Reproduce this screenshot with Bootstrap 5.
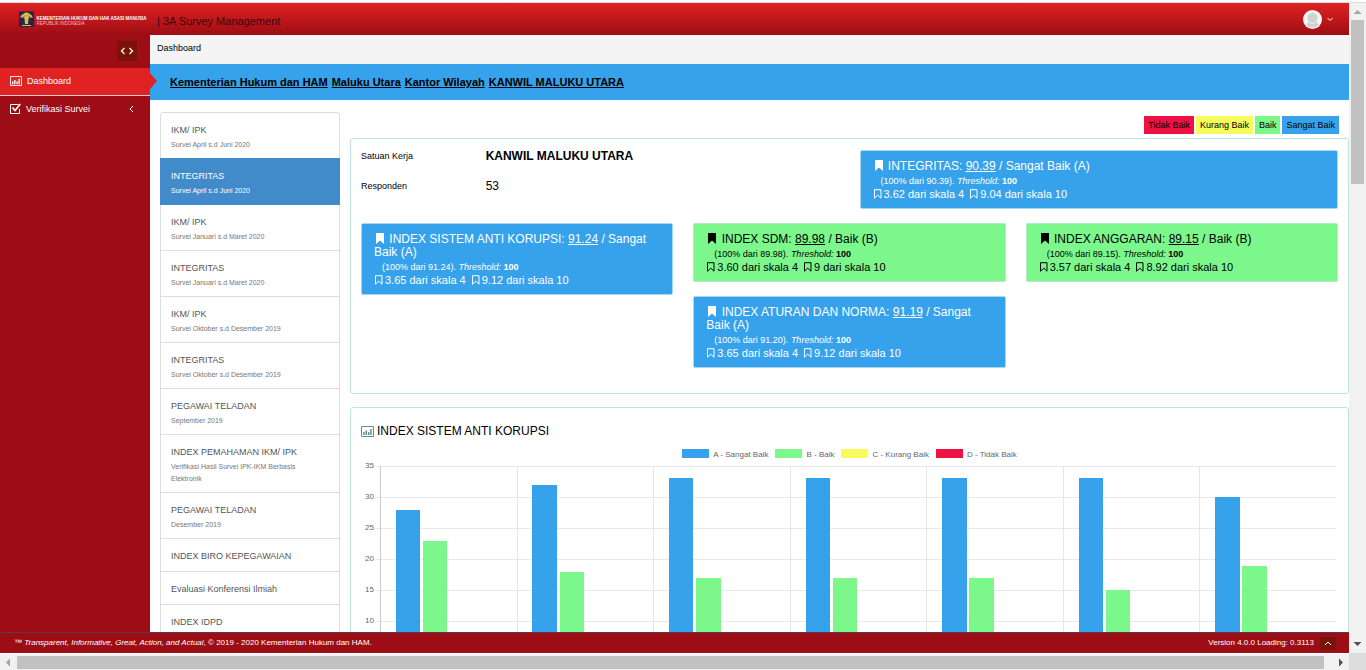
<!DOCTYPE html>
<html lang="id">
<head>
<meta charset="utf-8">
<meta name="viewport" content="width=device-width, initial-scale=1">
<title>3A Survey Management</title>
<link href="https://cdn.jsdelivr.net/npm/bootstrap@5.3.0/dist/css/bootstrap.min.css" rel="stylesheet">
<style>
:root{--red:#e02222;--dark:#9d0d15;--blue:#36a2eb;--green:#7bf78c;--yellow:#f7fb5c;--crimson:#ee1144}
body{font-family:"Liberation Sans",Arial,sans-serif;font-size:9px;line-height:12px;color:#000;background:#fff}
a{color:inherit}
.shell{height:100vh;display:grid;grid-template-columns:minmax(0,1fr) 17px;grid-template-rows:3px minmax(0,1fr) 17px;overflow:hidden}
.edge{grid-column:1/3;background:#fff;border-bottom:1px solid #dcdcdc}
.topbar{height:32px;background:linear-gradient(#e02222,#9d0d15);padding:0 16px 0 19px}
.app-name{font-size:11px;line-height:16px;color:#3a0508}
.user-btn{color:#fff;line-height:1;gap:5px}
.side{width:150px;background:var(--dark);color:#fff;position:relative;z-index:2}
.side-toggle{width:20px;height:20px;background:#7b1408;color:#fff;margin:6px 13px 7px auto}
.side-link{color:#fff;text-decoration:none;height:27px;padding:0 16px 2px 10px;gap:5px}
.side-link.current{background:var(--red);position:relative}
.side-link.current::after{content:"";position:absolute;left:100%;top:5px;border:8px solid transparent;border-left:7px solid var(--red);border-right:0}
.side-item{border-bottom:1px solid #f4c9cb}
.side-item:last-child{border:0}
.crumb{height:29px;background:#f4f4f4;padding:7px 7px 0}
.unitbar{background:var(--blue);height:36px;padding:0 20px;font-size:11px;font-weight:700;gap:4px}
.work{gap:10px;padding:12px 0 0 10px}
.survey-col{width:180px;flex:none}
.survey{--bs-list-group-border-color:#ddd;--bs-list-group-active-bg:#428bca;--bs-list-group-active-border-color:#428bca;--bs-list-group-border-radius:3px}
.survey .list-group-item{padding:10px 10px 7px;min-height:33px;color:#555}
.survey .list-group-item.active{color:#fff}
.survey strong{display:block;font-weight:400;line-height:14px}
.survey span{display:block;font-size:7px;margin-top:2px;color:#777;max-width:140px}
.survey .active span{color:#fff}
.keys{gap:2px;padding:4px 10px 4px 0}
.key{line-height:18px;padding:0 4px}
.k-a{background:var(--blue)}.k-b{background:var(--green)}.k-c{background:var(--yellow)}.k-d{background:var(--crimson)}
.panel{border:1px solid #bce3e6;border-radius:3px;padding:11px 10px;margin-bottom:13px}
.panel .row{--bs-gutter-x:20px}
.unit-facts dd{font-size:12px;margin-bottom:18px}
.unit-facts dd:last-child{margin-bottom:0}
.score{border:1px solid #a9d7f0;border-radius:2px;padding:9px 12px 7px;margin-bottom:14px;background:var(--blue);color:#fff}
.score.good{background:var(--green);border-color:#b4e9c4;color:#000}
.score h2{font-size:12px;line-height:13px;font-weight:400;margin:0 0 2px}
.score p{margin:0;padding-left:8px}
.score div{font-size:11px;line-height:14px}
.score h2 svg{margin:0 2px 2px;vertical-align:bottom}
.score div svg{margin-right:2px;vertical-align:-1px}
.score div span{margin-right:5px}
.chart-title{font-size:12px;line-height:24px;font-weight:400;margin:0;gap:3px}
.legend-row{font-size:8px;color:#666;gap:7px;margin-top:6px}
.legend-row i{width:27px;height:9px;display:inline-block;margin-right:4px;vertical-align:-1px}
.yaxis{width:14px;font-size:8px;line-height:10px;gap:21px;color:#666;text-align:right;padding-right:1px}
.plot{height:218px;margin:5px 2px 0 0;padding-left:5px;background:repeating-linear-gradient(#e9e9e9 0 1px,transparent 1px 31px)}
.plot-col{border-left:1px solid #e6e6e6;gap:2%}
.plot-col:first-child{border-left-color:#ccc}
.plot-col b{width:18%}
.plot-col b:first-child{margin-left:11%}
.foot{height:21px;background:var(--dark);border-top:1px solid #5d3a49;color:#fff;font-size:8px;padding:0 13px 0 14px}
.foot-end{gap:6px}
.to-top{width:16px;height:13px;background:#7b1408;color:#fff}
.vbar,.hbar{background:#f1f1f1}
.vbar .thumb{width:13px;height:164px;background:#c1c1c1}
.hbar .thumb{height:13px;background:#c1c1c1;flex:1}
.hbar{border-top:1px solid #fff}
.corner{background:#dcdcdc}
@media (max-width:767px){.work{flex-wrap:wrap}.survey-col{width:100%}}
</style>
</head>
<body>
<svg class="d-none">
  <symbol id="mark-full" viewBox="0 0 8 11"><path d="M0 0h8v11L4 7.6 0 11z" fill="currentColor"/></symbol>
  <symbol id="mark-line" viewBox="0 0 9 10"><path d="M1.500 .7h6.500v8.500L4.750 6.200 1.500 9.200z" fill="none" stroke="currentColor"/></symbol>
  <symbol id="bars" viewBox="0 0 13 11"><path d="M.5.500h12v10H.5z" fill="none" stroke="currentColor"/><path d="M2.200 6h1.500v3H2.200zM4.500 4.500H6V9H4.500zM6.900 6h1.500v3H6.900zM9.200 3h1.500v6H9.200z" fill="currentColor"/></symbol>
</svg>
<div class="shell">
  <div class="edge"></div>
  <div class="d-flex flex-column overflow-hidden">
    <header class="topbar d-flex align-items-center flex-shrink-0">
      <svg width="134" height="18" viewBox="0 0 268 36" role="img" aria-label="Kementerian Hukum dan HAM">
        <path d="M0 3h30v31H0z" fill="#2a2350"/>
        <path d="M15 5c4 0 6 2 7 4 3 0 5 3 5 7-3-2-6-2-8 1l-1 11h-6l-1-11c-2-3-5-3-8-1 0-4 2-7 5-7 1-2 3-4 7-4z" fill="#d9c04a"/>
        <path d="M9 14l3-3M21 14l-3-3" stroke="#2a2350" stroke-width="1.500"/>
        <path d="M6 31h18" fill="none" stroke="#d9c04a" stroke-width="2"/>
        <text x="35" y="20" font-size="9" font-weight="700" fill="#fff">KEMENTERIAN HUKUM DAN HAK ASASI MANUSIA</text>
        <text x="35" y="29" font-size="9" fill="#f3b9bb">REPUBLIK INDONESIA</text>
      </svg>
      <span class="app-name ps-1 pt-1">| 3A Survey Management</span>
      <button class="user-btn btn border-0 p-0 ms-auto d-flex align-items-center" type="button" aria-label="Akun">
        <svg width="19" height="19" viewBox="0 0 19 19"><circle cx="9.500" cy="9.500" r="9.500" fill="#f7f7f7"/><path d="M3 15c1-3 3-3 6.500-3s5.500 0 6.500 3a9 9 0 0 1-13 0z" fill="#d2d2d2"/><circle cx="9.500" cy="8" r="5.500" fill="#d2d2d2" stroke="#eee"/></svg>
        <svg width="6" height="5" viewBox="0 0 6 5"><path d="M.5 1L3 3.500 5.500 1" fill="none" stroke="currentColor"/></svg>
      </button>
    </header>
    <div class="d-flex flex-fill overflow-hidden">
      <nav class="side flex-shrink-0">
        <button class="side-toggle btn border-0 rounded-0 p-0 d-flex align-items-center justify-content-center" type="button" aria-label="Menu">
          <svg width="14" height="8" viewBox="0 0 14 8"><path d="M4.500 1l-3 3 3 3M9.500 1l3 3-3 3" fill="none" stroke="currentColor" stroke-width="1.200"/></svg>
        </button>
        <div class="side-item"><a class="side-link current d-flex align-items-center" href="#"><svg width="12" height="10"><use href="#bars"/></svg>Dashboard</a></div>
        <div class="side-item"><a class="side-link d-flex align-items-center" href="#"><svg width="11" height="11" viewBox="0 0 11 11"><path d="M8.500 1.500h-8v9h9V6" fill="none" stroke="currentColor"/><path d="M2.500 4.500L5 7.500 10.300 1" fill="none" stroke="currentColor" stroke-width="1.700"/></svg>Verifikasi Survei<svg class="ms-auto" width="5" height="8" viewBox="0 0 5 8"><path d="M4 1L1 4l3 3" fill="none" stroke="currentColor"/></svg></a></div>
      </nav>
      <main class="flex-fill overflow-hidden">
        <div class="crumb">Dashboard</div>
        <div class="unitbar d-flex align-items-center">
          <a href="#">Kementerian Hukum dan HAM</a><a href="#">Maluku Utara</a><a href="#">Kantor Wilayah</a><a href="#">KANWIL MALUKU UTARA</a>
        </div>
        <div class="work d-flex">
          <div class="survey-col">
            <div class="survey list-group">
              <a href="#" class="list-group-item"><strong>IKM/ IPK</strong><span>Survei April s.d Juni 2020</span></a>
              <a href="#" class="list-group-item active"><strong>INTEGRITAS</strong><span>Survei April s.d Juni 2020</span></a>
              <a href="#" class="list-group-item"><strong>IKM/ IPK</strong><span>Survei Januari s.d Maret 2020</span></a>
              <a href="#" class="list-group-item"><strong>INTEGRITAS</strong><span>Survei Januari s.d Maret 2020</span></a>
              <a href="#" class="list-group-item"><strong>IKM/ IPK</strong><span>Survei Oktober s.d Desember 2019</span></a>
              <a href="#" class="list-group-item"><strong>INTEGRITAS</strong><span>Survei Oktober s.d Desember 2019</span></a>
              <a href="#" class="list-group-item"><strong>PEGAWAI TELADAN</strong><span>September 2019</span></a>
              <a href="#" class="list-group-item"><strong>INDEX PEMAHAMAN IKM/ IPK</strong><span>Verifikasi Hasil Survei IPK-IKM Berbasis Elektronik</span></a>
              <a href="#" class="list-group-item"><strong>PEGAWAI TELADAN</strong><span>Desember 2019</span></a>
              <a href="#" class="list-group-item"><strong>INDEX BIRO KEPEGAWAIAN</strong></a>
              <a href="#" class="list-group-item"><strong>Evaluasi Konferensi Ilmiah</strong></a>
              <a href="#" class="list-group-item"><strong>INDEX IDPD</strong></a>
            </div>
          </div>
          <div class="flex-fill">
            <div class="keys d-flex justify-content-end">
              <span class="key k-d">Tidak Baik</span><span class="key k-c">Kurang Baik</span><span class="key k-b">Baik</span><span class="key k-a">Sangat Baik</span>
            </div>
            <section class="panel">
              <div class="row">
                <div class="col-6">
                  <dl class="unit-facts row mb-0">
                    <dt class="col-3 fw-normal">Satuan Kerja</dt><dd class="col-9 fw-bold">KANWIL MALUKU UTARA</dd>
                    <dt class="col-3 fw-normal">Responden</dt><dd class="col-9">53</dd>
                  </dl>
                </div>
                <div class="col-6">
                  <article class="score"><h2><svg width="8" height="11"><use href="#mark-full"/></svg> INTEGRITAS: <u>90.39</u> / Sangat Baik (A)</h2><p>(100% dari 90.39). <em>Threshold:</em> <b>100</b></p><div><span><svg width="9" height="10"><use href="#mark-line"/></svg>3.62 dari skala 4</span><span><svg width="9" height="10"><use href="#mark-line"/></svg>9.04 dari skala 10</span></div></article>
                </div>
              </div>
              <div class="row">
                <div class="col-4">
                  <article class="score"><h2><svg width="8" height="11"><use href="#mark-full"/></svg> INDEX SISTEM ANTI KORUPSI: <u>91.24</u> / Sangat <span>Baik (A)</span></h2><p>(100% dari 91.24). <em>Threshold:</em> <b>100</b></p><div><span><svg width="9" height="10"><use href="#mark-line"/></svg>3.65 dari skala 4</span><span><svg width="9" height="10"><use href="#mark-line"/></svg>9.12 dari skala 10</span></div></article>
                </div>
                <div class="col-4">
                  <article class="score good"><h2><svg width="8" height="11"><use href="#mark-full"/></svg> INDEX SDM: <u>89.98</u> / Baik (B)</h2><p>(100% dari 89.98). <em>Threshold:</em> <b>100</b></p><div><span><svg width="9" height="10"><use href="#mark-line"/></svg>3.60 dari skala 4</span><span><svg width="9" height="10"><use href="#mark-line"/></svg>9 dari skala 10</span></div></article>
                  <article class="score"><h2><svg width="8" height="11"><use href="#mark-full"/></svg> INDEX ATURAN DAN NORMA: <u>91.19</u> / Sangat <span>Baik (A)</span></h2><p>(100% dari 91.20). <em>Threshold:</em> <b>100</b></p><div><span><svg width="9" height="10"><use href="#mark-line"/></svg>3.65 dari skala 4</span><span><svg width="9" height="10"><use href="#mark-line"/></svg>9.12 dari skala 10</span></div></article>
                </div>
                <div class="col-4">
                  <article class="score good"><h2><svg width="8" height="11"><use href="#mark-full"/></svg> INDEX ANGGARAN: <u>89.15</u> / Baik (B)</h2><p>(100% dari 89.15). <em>Threshold:</em> <b>100</b></p><div><span><svg width="9" height="10"><use href="#mark-line"/></svg>3.57 dari skala 4</span><span><svg width="9" height="10"><use href="#mark-line"/></svg>8.92 dari skala 10</span></div></article>
                </div>
              </div>
            </section>
            <section class="panel">
              <h2 class="chart-title d-flex align-items-center"><svg width="13" height="11" color="#5f9098"><use href="#bars"/></svg>INDEX SISTEM ANTI KORUPSI</h2>
              <div class="legend-row d-flex justify-content-center">
                <span><i class="k-a"></i>A - Sangat Baik</span><span><i class="k-b"></i>B - Baik</span><span><i class="k-c"></i>C - Kurang Baik</span><span><i class="k-d"></i>D - Tidak Baik</span>
              </div>
              <div class="d-flex">
                <div class="yaxis d-flex flex-column"><span>35</span><span>30</span><span>25</span><span>20</span><span>15</span><span>10</span></div>
                <div class="plot d-flex flex-fill">
                  <div class="plot-col d-flex align-items-end flex-fill"><b class="k-a" style="height:80%"></b><b class="k-b" style="height:65.7%"></b></div>
                  <div class="plot-col d-flex align-items-end flex-fill"><b class="k-a" style="height:91.4%"></b><b class="k-b" style="height:51.4%"></b></div>
                  <div class="plot-col d-flex align-items-end flex-fill"><b class="k-a" style="height:94.3%"></b><b class="k-b" style="height:48.6%"></b></div>
                  <div class="plot-col d-flex align-items-end flex-fill"><b class="k-a" style="height:94.3%"></b><b class="k-b" style="height:48.6%"></b></div>
                  <div class="plot-col d-flex align-items-end flex-fill"><b class="k-a" style="height:94.3%"></b><b class="k-b" style="height:48.6%"></b></div>
                  <div class="plot-col d-flex align-items-end flex-fill"><b class="k-a" style="height:94.3%"></b><b class="k-b" style="height:42.9%"></b></div>
                  <div class="plot-col d-flex align-items-end flex-fill"><b class="k-a" style="height:85.7%"></b><b class="k-b" style="height:54.3%"></b></div>
                </div>
              </div>
            </section>
          </div>
        </div>
      </main>
    </div>
    <footer class="foot d-flex align-items-center justify-content-between flex-shrink-0">
      <span>™ <em>Transparent, Informative, Great, Action, and Actual</em>, © 2019 - 2020 Kementerian Hukum dan HAM.</span>
      <span class="foot-end d-flex align-items-center">Version 4.0.0 Loading: 0.3113
        <button class="to-top btn border-0 rounded-0 p-0 d-flex align-items-center justify-content-center" type="button" aria-label="Ke atas"><svg width="8" height="5" viewBox="0 0 8 5"><path d="M1 4l3-3 3 3" fill="none" stroke="currentColor"/></svg></button></span>
    </footer>
  </div>
  <div class="vbar d-flex flex-column align-items-center">
    <svg class="flex-shrink-0" width="17" height="17" viewBox="0 0 17 17"><path d="M8.500 7l4 4h-8z" fill="#a3a3a3"/></svg>
    <div class="thumb"></div>
    <svg class="mt-auto" width="17" height="17" viewBox="0 0 17 17"><path d="M4.500 6h8l-4 4z" fill="#505050"/></svg>
  </div>
  <div class="hbar d-flex align-items-center">
    <svg width="17" height="17" viewBox="0 0 17 17"><path d="M10 4.500v8l-4-4z" fill="#a3a3a3"/></svg>
    <div class="thumb"></div>
    <svg class="ms-2" width="17" height="17" viewBox="0 0 17 17"><path d="M7 4.500v8l4-4z" fill="#505050"/></svg>
  </div>
  <div class="corner"></div>
</div>
<script src="https://cdn.jsdelivr.net/npm/bootstrap@5.3.0/dist/js/bootstrap.bundle.min.js"></script>
</body>
</html>
